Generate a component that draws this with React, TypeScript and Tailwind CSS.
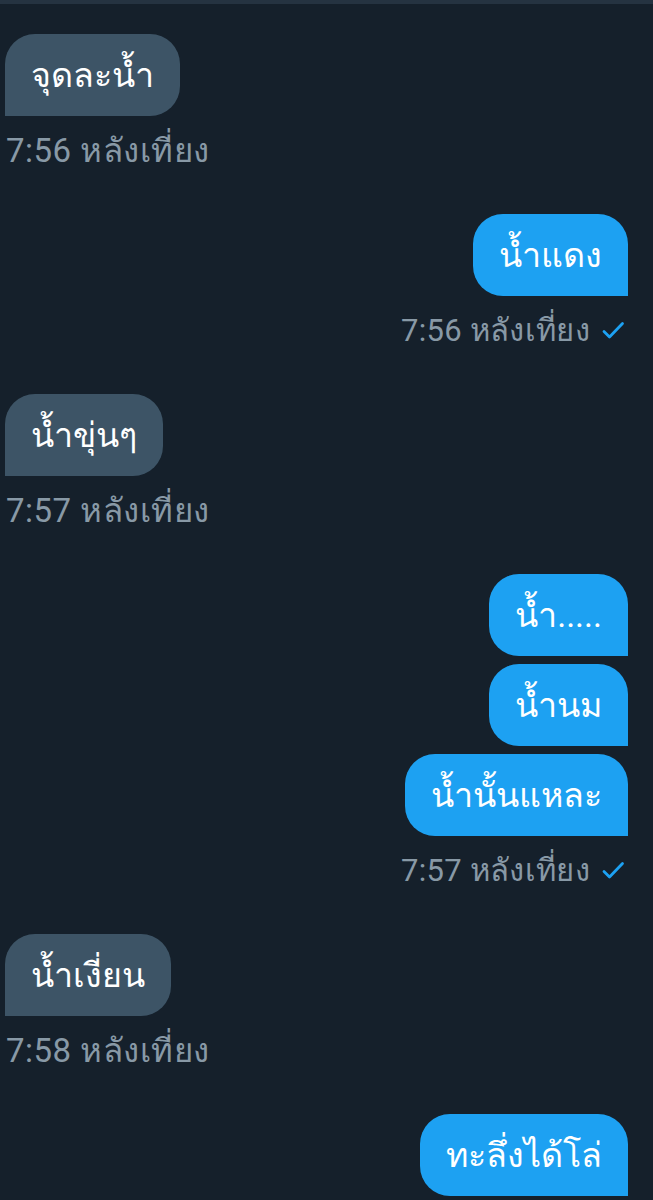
type Group = { side: "in" | "out"; texts: string[]; time: string };

const groups: Group[] = [
  { side: "in", texts: ["จุดละน้ำ"], time: "7:56 หลังเที่ยง" },
  { side: "out", texts: ["น้ำแดง"], time: "7:56 หลังเที่ยง" },
  { side: "in", texts: ["น้ำขุ่นๆ"], time: "7:57 หลังเที่ยง" },
  { side: "out", texts: ["น้ำ.....", "น้ำนม", "น้ำนั้นแหละ"], time: "7:57 หลังเที่ยง" },
  { side: "in", texts: ["น้ำเงี่ยน"], time: "7:58 หลังเที่ยง" },
  { side: "out", texts: ["ทะลึ่งได้โล่"], time: "" },
];

function Check() {
  return (
    <svg width="24" height="24" viewBox="0 0 24 24" className="ml-[11px] shrink-0">
      <path d="M3 12.5l5.5 5.5L21.5 4.5" fill="none" stroke="#1da1f2" strokeWidth="2.8" strokeLinecap="round" strokeLinejoin="round" />
    </svg>
  );
}

export default function App() {
  return (
    <div className="w-[653px] h-[1200px] overflow-hidden bg-[#15202b] font-['Roboto','Noto_Sans',sans-serif]">
      <div className="h-[4px] bg-[#253341]" />
      <div className="flex flex-col gap-[45px] pt-[30px]">
        {groups.map((g, i) => {
          const out = g.side === "out";
          return (
            <div key={i} className={out ? "flex flex-col items-end pr-[25px]" : "flex flex-col items-start pl-[5px]"}>
              <div className={out ? "flex flex-col items-end gap-[8px]" : "flex flex-col items-start gap-[8px]"}>
                {g.texts.map((t) => (
                  <div
                    key={t}
                    className={
                      out
                        ? "bg-[#1da1f2] text-white rounded-[30px] rounded-br-none px-[26px] py-[21px] text-[34px] leading-[40px]"
                        : "bg-[#3d5466] text-white rounded-[30px] rounded-bl-none px-[26px] py-[21px] text-[34px] leading-[40px]"
                    }
                  >
                    {t}
                  </div>
                ))}
              </div>
              {g.time && (
                <div className={out ? "mt-[17px] flex items-center pr-[3px] text-[#8899a6] text-[31px] leading-[36px] tracking-[0.3px]" : "mt-[17px] flex items-center pl-[1px] text-[#8899a6] text-[33px] leading-[36px] tracking-[0.5px]"}>
                  <span>{g.time}</span>
                  {out && <Check />}
                </div>
              )}
            </div>
          );
        })}
      </div>
    </div>
  );
}
